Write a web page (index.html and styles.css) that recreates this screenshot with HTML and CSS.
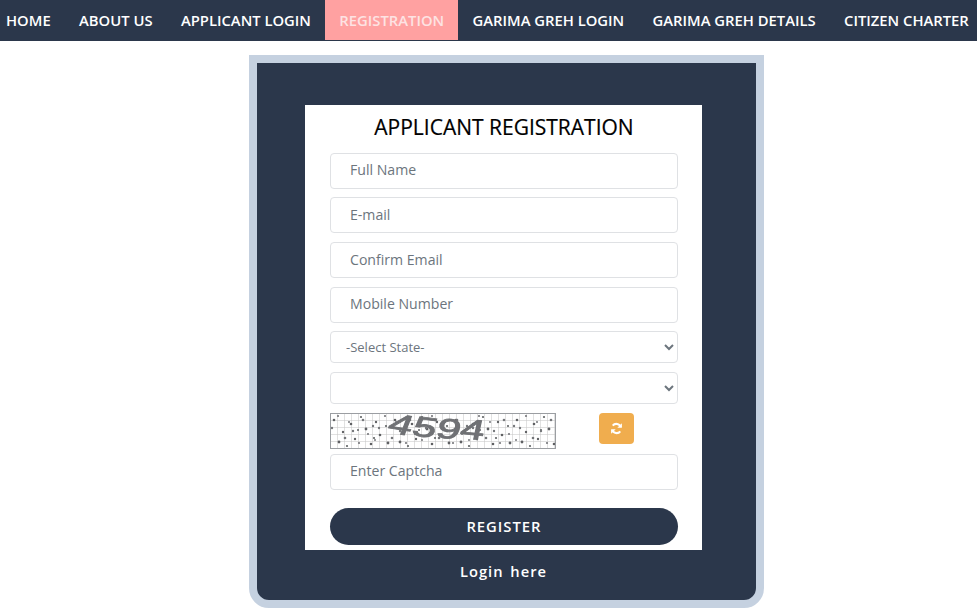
FILE: index.html
```html
<!DOCTYPE html>
<html lang="en">
<head>
<meta charset="utf-8">
<title>Applicant Registration</title>
<link rel="stylesheet" href="styles.css">
</head>
<body>
<nav class="nav">
  <a class="nav-link" href="#">HOME</a>
  <a class="nav-link" href="#">ABOUT US</a>
  <a class="nav-link" href="#">APPLICANT LOGIN</a>
  <a class="nav-link active" href="#">REGISTRATION</a>
  <a class="nav-link" href="#">GARIMA GREH LOGIN</a>
  <a class="nav-link" href="#">GARIMA GREH DETAILS</a>
  <a class="nav-link" href="#">CITIZEN CHARTER</a>
</nav>
<main class="card">
  <form class="form">
    <h1 class="title">APPLICANT REGISTRATION</h1>
    <input class="field" type="text" placeholder="Full Name">
    <input class="field" type="text" placeholder="E-mail">
    <input class="field" type="text" placeholder="Confirm Email">
    <input class="field" type="text" placeholder="Mobile Number">
    <select class="field select"><option>-Select State-</option></select>
    <select class="field select"><option></option></select>
    <div class="captcha-row">
      <svg class="captcha" width="226" height="36" viewBox="0 0 226 36">
        <defs>
          <filter id="soft" x="0" y="0" width="100%" height="100%"><feGaussianBlur stdDeviation="0.7"/></filter>
          <pattern id="grid" width="7" height="7" patternUnits="userSpaceOnUse">
            <path d="M7 0H0V7" fill="none" stroke="#c4c4c4" stroke-width="1"/>
          </pattern>
          <pattern id="noise" width="61" height="36" patternUnits="userSpaceOnUse">
            <g fill="#5f6164">
              <circle cx="4" cy="7" r="1.3"/><circle cx="13" cy="19" r="1.2"/><circle cx="9" cy="29" r="1.4"/>
              <circle cx="21" cy="11" r="1.3"/><circle cx="25" cy="26" r="1.2"/><circle cx="31" cy="4" r="1.1"/>
              <circle cx="36" cy="16" r="1.4"/><circle cx="41" cy="31" r="1.3"/><circle cx="46" cy="9" r="1.2"/>
              <circle cx="50" cy="22" r="1.3"/><circle cx="56" cy="13" r="1.1"/><circle cx="58" cy="30" r="1.4"/>
              <circle cx="17" cy="33" r="1.1"/><circle cx="28" cy="17" r="1"/><circle cx="44" cy="25" r="1.1"/>
            </g>
          </pattern>
          <pattern id="noise2" width="47" height="33" patternUnits="userSpaceOnUse">
            <g fill="#75777a">
              <circle cx="2" cy="15" r="1.2"/><circle cx="8" cy="3" r="1.1"/><circle cx="15" cy="25" r="1.3"/>
              <circle cx="19" cy="9" r="1"/><circle cx="23" cy="18" r="1.2"/><circle cx="29" cy="30" r="1.1"/>
              <circle cx="33" cy="7" r="1.3"/><circle cx="38" cy="21" r="1.1"/><circle cx="43" cy="13" r="1.2"/>
              <circle cx="45" cy="27" r="1"/>
            </g>
          </pattern>
        </defs>
        <rect width="226" height="36" fill="#fff"/>
        <g filter="url(#soft)">
          <rect width="226" height="36" fill="url(#grid)"/>
          <rect width="226" height="36" fill="url(#noise)"/>
          <rect width="226" height="36" fill="url(#noise2)"/>
          <text class="captcha-text" x="56" y="19 22 24 25" rotate="14 12 10 8" textLength="97" lengthAdjust="spacingAndGlyphs">4594</text>
        </g>
        <rect x=".5" y=".5" width="225" height="35" fill="none" stroke="#9b9ea2"/>
      </svg>
      <button class="refresh" type="button" aria-label="Refresh captcha">
        <svg width="13" height="13" viewBox="0 0 16 16" fill="none" stroke="#fff" stroke-width="2.6">
          <path d="M13.2 6.2A5.6 5.6 0 0 0 3.4 4.6"/>
          <path d="M2.8 9.8a5.6 5.6 0 0 0 9.8 1.6"/>
          <path d="M14.6 1.6v5.6H9z" fill="#fff" stroke="none"/>
          <path d="M1.4 14.4V8.8H7z" fill="#fff" stroke="none"/>
        </svg>
      </button>
    </div>
    <input class="field" type="text" placeholder="Enter Captcha">
    <button class="register" type="button">REGISTER</button>
  </form>
  <a class="login" href="#">Login here</a>
</main>
</body>
</html>
```
FILE: styles.css
```css
* { box-sizing: border-box; }
html, body { margin: 0; height: 610px; overflow: hidden; }
body { background: #fff; font-family: "Open Sans", "Liberation Sans", sans-serif; }

.nav {
  display: flex;
  height: 41px;
  padding-bottom: 1px;
  margin-left: -8.2px;
  background: #2b374b;
  white-space: nowrap;
}
.nav-link {
  display: flex;
  align-items: center;
  padding: 0 14.2px;
  color: #fff;
  font-size: 14.8px;
  font-weight: 600;
  text-decoration: none;
}
.nav-link.active { background: #ffa1a1; color: #fde3e3; }

.card {
  display: flex;
  flex-direction: column;
  align-items: center;
  width: 515px;
  height: 553px;
  margin: 14px 0 0 249px;
  padding: 42px 6px 0 0;
  background: #2b374b;
  border: 8px solid #c5d1e0;
  border-radius: 0 0 20px 20px;
}
.form {
  display: flex;
  flex-direction: column;
  width: 397px;
  height: 445px;
  padding: 0 24px 0 25px;
  background: #fff;
}
.title {
  margin: 8px 0 10.75px;
  color: #000;
  font-size: 21px;
  font-weight: 500;
  line-height: 29px;
  text-align: center;
  -webkit-text-stroke: 0.2px #000;
}
.field {
  flex: none;
  width: 348px;
  height: 36px;
  margin-bottom: 8.65px;
  padding: 0 19px 2px;
  background: #fff;
  border: 1px solid #dfe1e4;
  border-radius: 4px;
  color: #6c757d;
  font-family: inherit;
  font-size: 14.1px;
}
.field::placeholder { color: #6c757d; opacity: 1; }
.select {
  height: 32px;
  padding: 0 11px;
  font-size: 13px;
}
.captcha-row {
  display: flex;
  align-items: flex-start;
  height: 36px;
  margin-bottom: 5px;
}
.captcha { display: block; }
.captcha-text {
  fill: #6f7174;
  stroke: #6f7174;
  stroke-width: 0.8px;
  font-family: "Liberation Sans", sans-serif;
  font-size: 28px;
  font-weight: 400;
}
.refresh {
  display: flex;
  align-items: center;
  justify-content: center;
  width: 35px;
  height: 31px;
  margin-left: 43px;
  padding: 0;
  background: #f0ad4e;
  border: 0;
  border-radius: 4px;
}
.register {
  width: 348px;
  height: 37px;
  margin-top: 10px;
  padding: 0 0 2px;
  background: #2b374b;
  border: 0;
  border-radius: 19px;
  color: #fff;
  font-family: inherit;
  font-size: 14.8px;
  font-weight: 600;
  letter-spacing: 1px;
}
.login {
  margin-top: 10.5px;
  color: #fff;
  font-size: 14.7px;
  font-weight: 600;
  letter-spacing: 1px;
  word-spacing: 2px;
  text-decoration: none;
}
```
